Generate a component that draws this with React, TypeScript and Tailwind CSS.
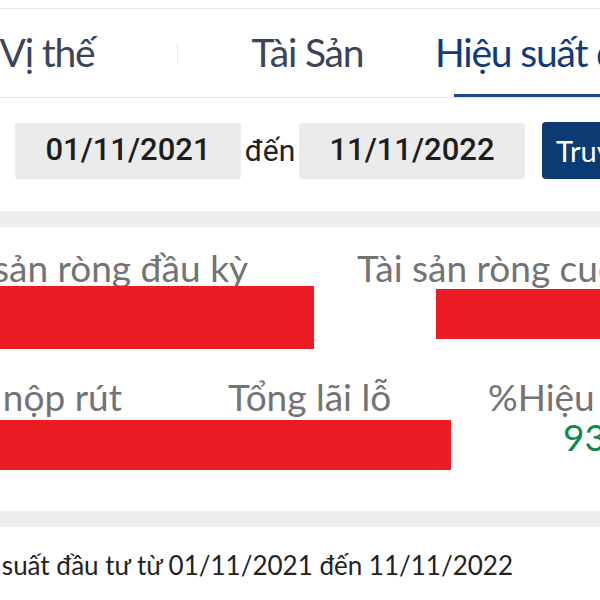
const red = "bg-[#ec1c24]";

function Tab({ label, active, width }: { label: string; active?: boolean; width: string }) {
  return (
    <div className={`${width} shrink-0 flex flex-col items-center`}>
      <span
        className={`pt-[20px] text-[39px] leading-[47px] tracking-[-0.03em] whitespace-nowrap ${
          active ? "text-[#0f3b78]" : "text-[#3b4558]"
        }`}
      >
        {label}
      </span>
      {active && <div className="mt-auto self-stretch mx-[16px] h-[3px] bg-[#1c4a8e]" />}
    </div>
  );
}

function Sep() {
  return <div className="w-px h-[20px] mt-[34px] shrink-0 bg-[#ececec]" />;
}

export default function App() {
  return (
    <div className="w-[600px] h-[600px] overflow-hidden bg-white font-['Lato',sans-serif]">
      <div className="h-[8px]" />
      <div className="h-px bg-[#e6e6e6]" />

      {/* tabs */}
      <div className="flex -ml-[83px] h-[89px] border-b border-[#e6e6e6]">
        <Tab label="Vị thế" width="w-[260px]" />
        <Sep />
        <Tab label="Tài Sản" width="w-[259px]" />
        <Sep />
        <Tab label="Hiệu suất đầu tư" width="w-[260px]" active />
      </div>

      {/* date filter */}
      <div className="flex items-center pt-[24px] pb-[32px] pl-[15px] text-[30px]">
        <div className="w-[226px] h-[56px] shrink-0 rounded-[3px] bg-[#ebebeb] flex items-center justify-center font-['Roboto',sans-serif] font-medium text-[31px] text-[#1d1d1d]">
          01/11/2021
        </div>
        <span className="w-[58px] shrink-0 text-center font-['Roboto',sans-serif] text-[#222]">đến</span>
        <div className="w-[226px] h-[56px] shrink-0 rounded-[3px] bg-[#ebebeb] flex items-center justify-center font-['Roboto',sans-serif] font-medium text-[31px] text-[#1d1d1d]">
          11/11/2022
        </div>
        <button className="ml-[17px] h-[57px] shrink-0 px-[14px] rounded-[4px] bg-[#0c3a72] text-white text-[29px] whitespace-nowrap">
          Truy vấn
        </button>
      </div>

      <div className="h-[16px] bg-[#eeeeee]" />

      {/* summary card */}
      <div className="pt-[19px] pb-[41px] text-[#737373] text-[37px] leading-[44px] whitespace-nowrap">
        <div className="flex">
          <div className="w-[357px] shrink-0 flex flex-col">
            <div className="flex justify-end pr-[109px]">Tài sản ròng đầu kỳ</div>
            <div className={`w-[314px] h-[63px] -mt-[4px] ${red}`} />
          </div>
          <div className="flex flex-col min-w-0">
            <div>Tài sản ròng cuối kỳ</div>
            <div className={`ml-[79px] w-[200px] h-[50px] -mt-[1px] ${red}`} />
          </div>
        </div>

        <div className="flex mt-[26px]">
          <div className="w-[488px] shrink-0 flex flex-col">
            <div className="flex">
              <div className="w-[228px] shrink-0 flex justify-end pr-[106px]">Tổng nộp rút</div>
              <div>Tổng lãi lỗ</div>
            </div>
            <div className={`w-[451px] h-[50px] mt-[1px] ${red}`} />
          </div>
          <div className="flex flex-col min-w-0">
            <div>%Hiệu suất</div>
            <div className="ml-[75px] leading-[36px] text-[#0b8c4c]">93</div>
          </div>
        </div>
      </div>

      <div className="h-[16px] bg-[#eeeeee]" />

      <div className="w-[513px] flex justify-end pt-[23px] text-[26px] leading-[31px] text-[#222] whitespace-nowrap">
        Hiệu suất đầu tư từ 01/11/2021 đến 11/11/2022
      </div>
    </div>
  );
}
